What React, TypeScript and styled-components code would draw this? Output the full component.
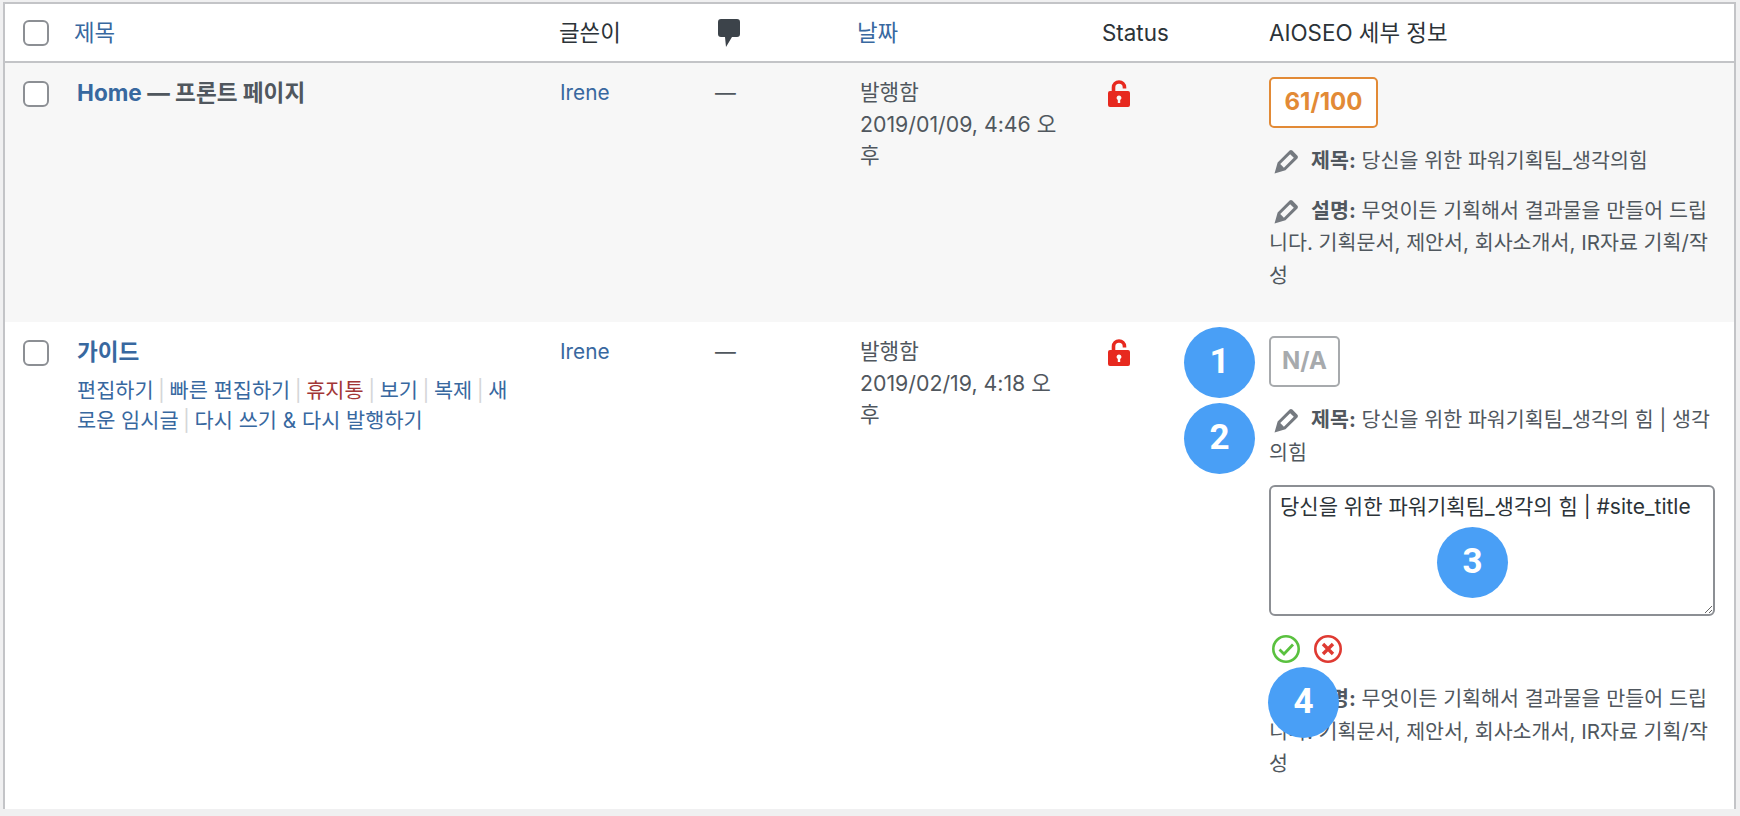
import { ReactElement } from "react";
import styled, { createGlobalStyle } from "styled-components";

const GlobalStyle = createGlobalStyle`
  html, body {
    margin: 0;
    padding: 0;
    background: #f0f0f1;
  }

  body {
    font-family: Inter, "Noto Sans CJK KR", sans-serif;
    font-size: 20.8px;
    line-height: 32.5px;
    color: #50575e;
  }
`;

function PencilIcon(): ReactElement {
  return (
    <svg width="25" height="25" viewBox="0 0 24 24">
      <path
        fillRule="evenodd"
        d="M0.500 23.500L3.500 13 15 1.500q1.300-1.100 2.600 0l4.900 4.900q1.100 1.300 0 2.600L11 20.500zM6 14.500l3.500 3.500 9.500-9.500-3.500-3.500z"
        fill="#757a80"
      />
    </svg>
  );
}

function CommentIcon(): ReactElement {
  return (
    <svg width="22" height="28" viewBox="0 0 22 28">
      <path
        d="M3 0h16a3 3 0 0 1 3 3v12a3 3 0 0 1-3 3h-5L8 28l-1-10H3a3 3 0 0 1-3-3V3a3 3 0 0 1 3-3z"
        fill="#3c434a"
      />
    </svg>
  );
}

function UnlockIcon(): ReactElement {
  return (
    <svg width="22" height="27" viewBox="0 0 22 27">
      <path
        d="M5.500 12V7.500a5.500 5.500 0 0 1 11 0v1"
        fill="none"
        stroke="#e7291f"
        strokeWidth="3.600"
      />
      <path
        fillRule="evenodd"
        d="M2 11h18a2 2 0 0 1 2 2v12a2 2 0 0 1-2 2H2a2 2 0 0 1-2-2V13a2 2 0 0 1 2-2zm9 4.500a2.400 2.400 0 0 0-1.200 4.500V23h2.400v-3a2.400 2.400 0 0 0-1.200-4.500z"
        fill="#e7291f"
      />
    </svg>
  );
}

function CheckIcon(): ReactElement {
  return (
    <svg width="28" height="28" viewBox="0 0 28 28" fill="none">
      <circle cx="14" cy="14" r="12.700" stroke="#5ac13f" strokeWidth="2.600" />
      <path d="M7.500 14.500l4.500 4.500 9-9.500" stroke="#5ac13f" strokeWidth="2.800" />
    </svg>
  );
}

function CloseIcon(): ReactElement {
  return (
    <svg width="28" height="28" viewBox="0 0 28 28" fill="none">
      <circle cx="14" cy="14" r="12.700" stroke="#df3a32" strokeWidth="2.600" />
      <path d="M9 9l10 10M19 9L9 19" stroke="#df3a32" strokeWidth="3.400" />
    </svg>
  );
}

const ROW_ACTIONS = ["편집하기", "빠른 편집하기", "휴지통", "보기", "복제", "새로운 임시글", "다시 쓰기 & 다시 발행하기"];

export default function App(): ReactElement {
  return (
    <Page>
      <GlobalStyle />
      <PostTable>
        <colgroup>
          <col width="57" />
          <col width="483" />
          <col width="158" />
          <col width="142" />
          <col width="243" />
          <col width="166" />
          <col />
        </colgroup>
        <thead>
          <tr>
            <HeadCell>
              <Checkbox />
            </HeadCell>
            <HeadCell $pad={12}>
              <HeadLink>제목</HeadLink>
            </HeadCell>
            <HeadCell $pad={14}>글쓴이</HeadCell>
            <HeadCell $pad={15}>
              <CommentIcon />
            </HeadCell>
            <HeadCell $pad={12}>
              <HeadLink>날짜</HeadLink>
            </HeadCell>
            <HeadCell $pad={14}>Status</HeadCell>
            <HeadCell $pad={15}>AIOSEO 세부 정보</HeadCell>
          </tr>
        </thead>
        <tbody>
          <Row $shaded $height={259}>
            <CheckCell>
              <Checkbox />
            </CheckCell>
            <TitleCell>
              <RowTitle>
                <a>Home</a> — 프론트 페이지
              </RowTitle>
            </TitleCell>
            <Cell $pad={15}>
              <Link>Irene</Link>
            </Cell>
            <Cell $pad={12}>—</Cell>
            <DateCell>
              발행함
              <br />
              2019/01/09, 4:46 오후
            </DateCell>
            <LockCell>
              <UnlockIcon />
            </LockCell>
            <SeoCell>
              <ScoreBadge $color="#e28a36" $width={109}>
                61/100
              </ScoreBadge>
              <SeoLine>
                <PencilSlot>
                  <PencilIcon />
                </PencilSlot>
                <strong>제목:</strong> 당신을 위한 파워기획팀_생각의힘
              </SeoLine>
              <SeoLine>
                <PencilSlot>
                  <PencilIcon />
                </PencilSlot>
                <strong>설명:</strong> 무엇이든 기획해서 결과물을 만들어 드립니다. 기획문서, 제안서, 회사소개서, IR자료 기획/작성
              </SeoLine>
            </SeoCell>
          </Row>
          <Row $height={487}>
            <CheckCell>
              <Checkbox />
            </CheckCell>
            <TitleCell>
              <RowTitle>
                <a>가이드</a>
              </RowTitle>
              <RowActions>
                {ROW_ACTIONS.map((action, index) => (
                  <span key={action}>
                    {index > 0 && <Divider> | </Divider>}
                    <ActionLink $danger={action === "휴지통"}>{action}</ActionLink>
                  </span>
                ))}
              </RowActions>
            </TitleCell>
            <Cell $pad={15}>
              <Link>Irene</Link>
            </Cell>
            <Cell $pad={12}>—</Cell>
            <DateCell>
              발행함
              <br />
              2019/02/19, 4:18 오후
            </DateCell>
            <LockCell>
              <UnlockIcon />
            </LockCell>
            <SeoCell>
              <ScoreBadge $color="#a7aaad" $width={71}>
                N/A
              </ScoreBadge>
              <SeoLine>
                <PencilSlot>
                  <PencilIcon />
                </PencilSlot>
                <strong>제목:</strong> 당신을 위한 파워기획팀_생각의 힘 | 생각의힘
              </SeoLine>
              <TitleInput defaultValue="당신을 위한 파워기획팀_생각의 힘 | #site_title" />
              <EditActions>
                <CheckIcon />
                <CloseIcon />
              </EditActions>
              <SeoLine>
                <PencilSlot>
                  <PencilIcon />
                </PencilSlot>
                <strong>설명:</strong> 무엇이든 기획해서 결과물을 만들어 드립니다. 기획문서, 제안서, 회사소개서, IR자료 기획/작성
              </SeoLine>
            </SeoCell>
          </Row>
        </tbody>
      </PostTable>
      <StepMarker $x={1184} $y={327}>1</StepMarker>
      <StepMarker $x={1184} $y={403}>2</StepMarker>
      <StepMarker $x={1437} $y={527}>3</StepMarker>
      <StepMarker $x={1268} $y={667}>4</StepMarker>
    </Page>
  );
}

const Page = styled.div`
  position: relative;
  height: 816px;
  padding: 2px 4px 0 3px;
  box-sizing: border-box;
  overflow: hidden;
`;

const PostTable = styled.table`
  width: 100%;
  table-layout: fixed;
  border-collapse: separate;
  border-spacing: 0;
  background: #fff;
  border: 2px solid #c3c4c7;
  border-bottom: 0;
`;

const HeadCell = styled.th<{ $pad?: number }>`
  height: 59px;
  padding: 1px 0 0 ${(p) => p.$pad ?? 18}px;
  box-sizing: border-box;
  border-bottom: 2px solid #c3c4c7;
  text-align: left;
  font-weight: 400;
  font-size: 22.400px;
  color: #2c3338;
  vertical-align: middle;

  svg {
    display: block;
  }
`;

const HeadLink = styled.a`
  color: #38689f;
`;

const Row = styled.tr<{ $shaded?: boolean; $height: number }>`
  height: ${(p) => p.$height}px;
  background: ${(p) => (p.$shaded ? "#f7f7f7" : "#fff")};
`;

const Cell = styled.td<{ $pad?: number }>`
  padding: 14px 0 0 ${(p) => p.$pad ?? 18}px;
  vertical-align: top;
`;

const CheckCell = styled(Cell)`
  padding-top: 18px;
`;

const TitleCell = styled(Cell)`
  padding: 14px 25px 0 15px;
`;

const DateCell = styled(Cell)`
  padding: 14px 26px 0 15px;
  font-size: 21.300px;
  line-height: 31.500px;
`;

const LockCell = styled(Cell)`
  padding: 17px 0 0 20px;

  svg {
    display: block;
  }
`;

const SeoCell = styled(Cell)`
  padding: 14px 19px 0 15px;
`;

const Checkbox = styled.span`
  display: block;
  width: 26px;
  height: 26px;
  box-sizing: border-box;
  border: 2px solid #8c8f94;
  border-radius: 6px;
  background: #fff;
`;

const RowTitle = styled.div`
  font-size: 22.600px;
  font-weight: 700;
  color: #50575e;

  a {
    color: #38689f;
  }
`;

const RowActions = styled.div`
  margin-top: 7px;
  line-height: 30.500px;
`;

const Divider = styled.span`
  color: #d5d6d8;
  word-spacing: -1.300px;
`;

const ActionLink = styled.a<{ $danger?: boolean }>`
  color: ${(p) => (p.$danger ? "#a23636" : "#38689f")};
`;

const Link = styled.a`
  color: #38689f;
`;

const ScoreBadge = styled.div<{ $color: string; $width: number }>`
  display: flex;
  align-items: center;
  justify-content: center;
  width: ${(p) => p.$width}px;
  height: 51px;
  box-sizing: border-box;
  border: 2px solid ${(p) => p.$color};
  border-radius: 5px;
  background: #fff;
  font-size: 24px;
  font-weight: 700;
  color: ${(p) => p.$color};
`;

const SeoLine = styled.div`
  margin-top: 17px;
  font-size: 20.600px;

  strong {
    font-weight: 700;
  }
`;

const PencilSlot = styled.span`
  display: inline-block;
  margin: 0 12px 0 5px;
  vertical-align: -5px;
  height: 24px;

  svg {
    display: block;
  }
`;

const TitleInput = styled.textarea`
  display: block;
  width: 100%;
  height: 131px;
  margin-top: 16px;
  padding: 6px 9px;
  box-sizing: border-box;
  border: 2px solid #8c8f94;
  border-radius: 6px;
  background: #fff;
  font-family: Inter, "Noto Sans CJK KR", sans-serif;
  font-size: 21px;
  line-height: 28px;
  color: #2c3338;
`;

const EditActions = styled.div`
  display: flex;
  gap: 14px;
  margin: 19px 0 20px;
  padding-left: 3px;

  svg {
    display: block;
  }
`;

const StepMarker = styled.div<{ $x: number; $y: number }>`
  position: absolute;
  left: ${(p) => p.$x}px;
  top: ${(p) => p.$y}px;
  display: flex;
  align-items: center;
  justify-content: center;
  width: 71px;
  height: 71px;
  border-radius: 50%;
  background: #499ff6;
  font-family: Roboto, sans-serif;
  font-size: 35px;
  font-weight: 700;
  color: #fff;
`;
